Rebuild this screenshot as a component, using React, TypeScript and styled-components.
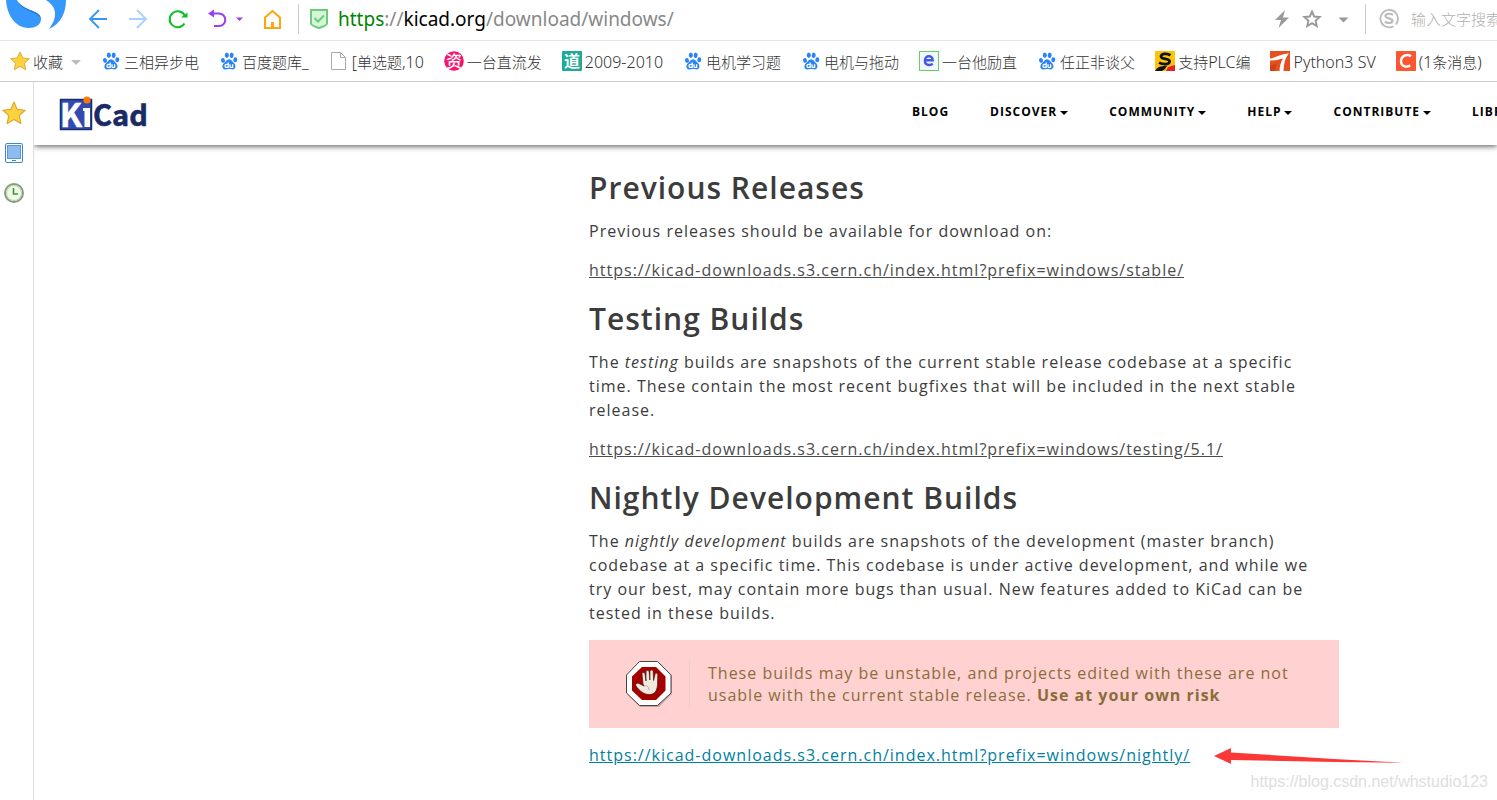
import React from "react";
import styled, { createGlobalStyle } from "styled-components";

const GlobalStyle = createGlobalStyle`
  * { box-sizing: border-box; }
  body {
    margin: 0;
    background: #fff;
    overflow: hidden;
    font-family: "Open Sans", "Noto Sans CJK SC", sans-serif;
  }
`;

const uiFont = `"Noto Sans", "Noto Sans CJK SC", sans-serif`;

/* ---------- browser chrome ---------- */

const Browser = styled.div`
  display: flex;
  flex-direction: column;
  min-height: 100vh;
  overflow: hidden;
`;

const Toolbar = styled.header`
  display: flex;
  align-items: center;
  height: 41px;
  padding-bottom: 2px;
  border-bottom: 1px solid #e5e5e5;
  overflow: hidden;
`;

const BrandMark = styled.div`
  width: 78px;
  height: 38px;
  flex: none;
`;

const ToolButtons = styled.div`
  display: flex;
  align-items: center;
  gap: 20px;
  padding-left: 10px;
  flex: none;
`;

const ToolButton = styled.button<{ $w?: number }>`
  display: flex;
  align-items: center;
  width: ${(p) => p.$w ?? 20}px;
  height: 24px;
  padding: 0;
  border: 0;
  background: none;
  flex: none;
`;

const Divider = styled.span<{ $gap: number }>`
  width: 1px;
  height: 30px;
  margin: 0 10px 0 ${(p) => p.$gap}px;
  background: #ccc;
  flex: none;
`;

const Address = styled.div`
  display: flex;
  flex: 1;
  align-items: center;
  gap: 9px;
  min-width: 0;
`;

const Url = styled.span`
  font: 19px/24px ${uiFont};
  color: #888;
  white-space: nowrap;
`;

const Scheme = styled.span`
  color: #008500;
`;

const Host = styled.span`
  color: #000;
`;

const AddressTools = styled.div`
  display: flex;
  gap: 10px;
  flex: none;
`;

const SearchLabel = styled.label`
  display: flex;
  align-items: center;
  gap: 12px;
  width: 121px;
  padding-left: 3px;
  flex: none;
  overflow: hidden;
  svg { flex: none; }
`;

const SearchInput = styled.input`
  width: 180px;
  padding: 0;
  border: 0;
  outline: 0;
  flex: none;
  font: 300 15px/24px ${uiFont};
  background: none;
  &::placeholder {
    color: #b0b0b0;
    opacity: 1;
  }
`;

const Bookmarks = styled.nav`
  display: flex;
  align-items: center;
  gap: 20px;
  height: 41px;
  padding: 2px 0 0 10px;
  border-bottom: 1px solid #ccc;
  overflow: hidden;
`;

const Bookmark = styled.a`
  display: flex;
  align-items: center;
  gap: 3px;
  flex: none;
  color: #333;
  font: 300 15px/22px ${uiFont};
  text-decoration: none;
  white-space: nowrap;
  svg { margin-bottom: 2px; }
`;

const BookmarkMenu = styled(Bookmark).attrs({ as: "button" })`
  padding: 0;
  border: 0;
  background: none;
`;

const Latin = styled.span`
  font-size: 16px;
`;

const MenuCaret = styled.span`
  margin-left: 5px;
  border: 5px solid transparent;
  border-top-color: #bbb;
  border-bottom: 0;
`;

const Main = styled.div`
  display: flex;
  flex: 1;
`;

const SideBar = styled.aside`
  display: flex;
  flex-direction: column;
  align-items: center;
  gap: 16px;
  width: 34px;
  padding: 19px 6px 0 0;
  border-right: 1px solid #ddd;
  flex: none;
`;

const SideButton = styled(ToolButton)`
  width: 24px;
  justify-content: center;
`;

/* ---------- site ---------- */

const Site = styled.div`
  flex: 1;
  min-width: 0;
  overflow: hidden;
`;

const SiteHeader = styled.header`
  position: relative;
  display: flex;
  align-items: center;
  height: 63px;
  padding-left: 25px;
  background: #fff;
  box-shadow: 0 1px 6px rgba(0, 0, 0, 0.7);
`;

const LogoLink = styled.a`
  display: flex;
  flex: none;
  width: 90px;
`;

const SiteNav = styled.nav`
  display: flex;
  gap: 41px;
  margin-left: 763px;
  padding-bottom: 3px;
`;

const NavItem = styled.a`
  display: flex;
  align-items: center;
  gap: 3px;
  color: #000;
  font: 700 12px/20px "Open Sans", sans-serif;
  letter-spacing: 1px;
  text-decoration: none;
  white-space: nowrap;
`;

const NavCaret = styled.span`
  margin-top: 2px;
  border: 4px solid transparent;
  border-top-color: #000;
  border-bottom: 0;
`;

const Article = styled.main`
  width: 750px;
  margin-left: 555px;
  padding-top: 6px;
  color: #3c3c3c;
  font-size: 16px;
  line-height: 24px;
  letter-spacing: 1px;
`;

const Heading = styled.h2`
  margin: 20px 0 15px;
  font-size: 30px;
  line-height: 33px;
  font-weight: 600;
  letter-spacing: 1px;
`;

const Text = styled.p`
  margin: 0 0 15px;
  padding-right: 10px;
`;

const TextLink = styled.a<{ $active?: boolean }>`
  color: ${(p) => (p.$active ? "#007f9f" : "#4c4c4c")};
  text-decoration: underline;
`;

const Warning = styled.div`
  display: flex;
  align-items: center;
  height: 88px;
  margin-bottom: 15px;
  padding: 0 20px;
  background: #ffd1d1;
  color: #8a6d3b;
  line-height: 22px;
`;

const WarningIcon = styled.div`
  display: flex;
  align-items: center;
  width: 81px;
  height: 48px;
  padding-left: 16px;
  border-right: 1px solid #e6d0c8;
  flex: none;
`;

const WarningText = styled.p`
  margin: 0 0 0 18px;
`;

const LinkRow = styled.div`
  display: flex;
  align-items: center;
  gap: 24px;
  white-space: nowrap;
  svg { flex: none; }
`;

const Watermark = styled.div`
  position: absolute;
  right: 9px;
  bottom: 8px;
  color: #dedede;
  font: 16px/20px "Liberation Sans", sans-serif;
`;

/* ---------- icons ---------- */

const Paw = () => (
  <svg width="20" height="20" viewBox="0 0 20 20">
    <g fill="#2b83f6">
      <ellipse cx="4" cy="9.4" rx="2" ry="2.5" transform="rotate(-12 4 9.4)" />
      <ellipse cx="7.8" cy="4.2" rx="2" ry="2.7" />
      <ellipse cx="12.7" cy="4.3" rx="2" ry="2.7" transform="rotate(10 12.7 4.3)" />
      <ellipse cx="16.3" cy="8.7" rx="2" ry="2.5" transform="rotate(8 16.3 8.7)" />
      <path d="M10.1 8.2c2.3 0 3 2.3 4.8 3.8 2.2 1.9 2.4 6.3-1.4 6.4-1.4 0-2-.4-3.5-.4s-2.2.5-3.6.4c-3.7-.2-3.7-4.3-1.4-6.2 2-1.7 2.7-4 5.1-4z" />
    </g>
    <g fill="none" stroke="#fff" strokeWidth="1.3">
      <path d="M9.2 11.4v5H7.5a1.4 1.4 0 0 1 0-3h1.7M11 13.2v2.2q0 1 1 1h1.6v-3.2" />
    </g>
  </svg>
);

const StarIcon = ({ size = 20 }: { size?: number }) => (
  <svg width={size} height={size} viewBox="0 0 22 22">
    <path d="M11 1l3 6.7 7.2.8-5.4 4.9 1.5 7.2-6.3-3.7-6.3 3.7 1.5-7.2L.8 8.5 8 7.7z" fill="#fcd33c" stroke="#dfa32c" strokeWidth="1" strokeLinejoin="round" />
  </svg>
);

const PageIcon = () => (
  <svg width="20" height="20" viewBox="0 0 20 20" fill="#fff" stroke="#aaa">
    <path d="M2.500 1.500h9l5 5v12h-14zM11.500 1.500v5h5" />
  </svg>
);

const ZiIcon = () => (
  <svg width="20" height="20" viewBox="0 0 20 20">
    <circle cx="10" cy="10" r="9.8" fill="#f5156f" />
    <text x="10" y="16" textAnchor="middle" fontFamily="Noto Sans CJK SC" fontWeight="500" fontSize="16" fill="#fff">资</text>
  </svg>
);

const DaoIcon = () => (
  <svg width="20" height="20" viewBox="0 0 20 20">
    <rect width="20" height="20" rx="1" fill="#1faa98" />
    <text x="10" y="16" textAnchor="middle" fontFamily="Noto Sans CJK SC" fontWeight="700" fontSize="16" fill="#fff">道</text>
  </svg>
);

const EIcon = () => (
  <svg width="20" height="20" viewBox="0 0 20 20">
    <rect x=".5" y=".5" width="19" height="19" fill="#f4f6ff" stroke="#5fd35f" />
    <path d="M5.500 9.200h8.200c0-5.300-7.800-5.300-7.800.2 0 5.200 5.400 5.300 7.800 3.400" fill="none" stroke="#4059e8" strokeWidth="2.400" />
  </svg>
);

const SIcon = () => (
  <svg width="20" height="20" viewBox="0 0 20 20">
    <rect width="20" height="20" rx="1" fill="#fdc50a" />
    <path d="M11 20l2-4 7-2v6z" fill="#e32222" />
    <path d="M15.500 4.200C12 2 5.500 2.500 6 5.700c.5 3 9 1.400 8.600 4.900-.4 3.400-7.600 2.800-10.600 1" fill="none" stroke="#111" strokeWidth="2.800" />
    <path d="M0 20c1-1 2-4 6-4.500 3-.3 4-1 6-.5L10 18l-3 2z" fill="#111" />
  </svg>
);

const OneIcon = () => (
  <svg width="20" height="20" viewBox="0 0 20 20">
    <rect width="20" height="20" fill="#e5501f" />
    <path d="M0 7.500C6 7 9 3 19 2.500 15 7 14 12 13.500 20H9.500c.3-5 1-8.500 3.500-12.500C9 8 6 10 0 9.500z" fill="#fff" />
    <path d="M0 15l7-3-2 8H0z" fill="#cf4219" />
  </svg>
);

const CIcon = () => (
  <svg width="20" height="20" viewBox="0 0 20 20">
    <rect width="20" height="20" rx="1" fill="#fc5531" />
    <path d="M15 5.300C11 2.700 5.200 4.500 5 10c-.1 5.500 5 6.700 9.300 4.700" fill="none" stroke="#fff" strokeWidth="2.400" />
  </svg>
);

const KiCadLogo = () => (
  <svg width="90" height="36" viewBox="0 0 90 36" role="img" aria-label="KiCad">
    <rect x="1.500" y="3.500" width="31" height="30" fill="#314cb0" stroke="#1c2c68" strokeWidth="1.500" />
    <g fontFamily="Noto Sans CJK SC, sans-serif" fontWeight="700">
      <text x="1" y="31" fontSize="32" fill="#fff" stroke="#fff" strokeWidth=".6">K</text>
      <text x="34" y="30" fontSize="29" fill="#1a2a66" stroke="#1a2a66" strokeWidth=".6">Cad</text>
    </g>
    <path d="M24 12h7v19h-5.500V15H24z" fill="#fff" />
    <circle cx="28" cy="4" r="3.600" fill="#ff7800" />
  </svg>
);

const StopHand = () => (
  <svg width="48" height="48" viewBox="0 0 48 48">
    <path d="M15 3h20l12 13v18L34 47H15L3 35V15z" fill="#555" opacity=".35" />
    <path d="M14.500 1.500h18L46 15v18L32.500 45.500h-18L1.500 33V15z" fill="#fff" stroke="#444" />
    <path d="M17 7h14l9.500 9.500v14L31 40H17l-10-9.500v-14z" fill="#a50000" />
    <path d="M18 24l-1-10c0-2 2.600-2 3 0l1 7V12c0-2 3-2 3.200 0l.6 8 .2-8.500c0-2 3-2 3.200 0l.4 9 1.400-6c.4-2 3-1.500 2.800.5L32.500 25c-.5 6-3 9.500-8 9.500-5.500 0-10-3.500-13.500-8.500-1-2 1-3.500 3-2.500l5 2.500z" fill="#f0eadf" stroke="#4b1512" strokeWidth=".7" />
    <path d="M19 26c3-1 5 1 5 4" fill="none" stroke="#b9aa98" />
  </svg>
);

const bookmarks: [React.FC, string][] = [
  [Paw, "三相异步电"],
  [Paw, "百度题库_"],
  [PageIcon, "[单选题,10"],
  [ZiIcon, "一台直流发"],
  [DaoIcon, "2009-2010"],
  [Paw, "电机学习题"],
  [Paw, "电机与拖动"],
  [EIcon, "一台他励直"],
  [Paw, "任正非谈父"],
  [SIcon, "支持PLC编"],
  [OneIcon, "Python3 SV"],
  [CIcon, "(1条消息)"],
];

/* Latin runs are set one size up so they sit evenly beside the Chinese characters. */
const BookmarkLabel = ({ text }: { text: string }) => (
  <span>
    {text.split(/([\x20-\x7e]+)/).map((run, i) => (i % 2 ? <Latin key={i}>{run}</Latin> : run))}
  </span>
);

const navItems: [string, boolean][] = [
  ["BLOG", false],
  ["DISCOVER", true],
  ["COMMUNITY", true],
  ["HELP", true],
  ["CONTRIBUTE", true],
  ["LIBRARIES", true],
];

const downloads = "https://kicad-downloads.s3.cern.ch/index.html?prefix=windows/";

export default function App() {
  return (
    <Browser>
      <GlobalStyle />
      <Toolbar>
        <BrandMark>
          <svg width="78" height="38" viewBox="0 0 78 38">
            <path d="M6 0C7 16 16 28 29 28c6 0 12-3 12-9C41 10 22 11 17 0z" fill="#3698fc" />
            <path d="M46 0c11 7 12 17 3 29C61 24 66 12 66 0z" fill="#3698fc" />
            <path d="M17 0c5 11 24 10 24 19C37 11 22 12 17 0z" fill="#1c78dc" />
          </svg>
        </BrandMark>
        <ToolButtons>
          <ToolButton aria-label="Back">
            <svg width="20" height="20" viewBox="0 0 20 20" fill="none" stroke="#3596fa" strokeWidth="1.800"><path d="M19 10H3M11 1l-9 9 9 9" /></svg>
          </ToolButton>
          <ToolButton aria-label="Forward">
            <svg width="20" height="20" viewBox="0 0 20 20" fill="none" stroke="#a9d1fd" strokeWidth="1.800"><path d="M1 10h16M9 1l9 9-9 9" /></svg>
          </ToolButton>
          <ToolButton aria-label="Reload">
            <svg width="20" height="20" viewBox="0 0 20 20"><path d="M16.500 14.500A8 8 0 1 1 17 7" fill="none" stroke="#0abf20" strokeWidth="2" /><path d="M13 8.500h6.500V3.500z" fill="#0abf20" /></svg>
          </ToolButton>
          <ToolButton aria-label="Undo" $w={36}>
            <svg width="36" height="20" viewBox="0 0 36 20"><path d="M4 4.500h7a6.200 6.200 0 0 1 0 12.500H6" fill="none" stroke="#9a3df4" strokeWidth="2" /><path d="M0 4.500L6 .5v8zM28 8.500h7L31.500 12z" fill="#9a3df4" /></svg>
          </ToolButton>
          <ToolButton aria-label="Home">
            <svg width="20" height="20" viewBox="0 0 20 20" fill="none" stroke="#ffa511" strokeWidth="2"><path d="M1 8.500V19h15V8.500L8.500 2z" /><path d="M8.500 19v-6" strokeWidth="3" /></svg>
          </ToolButton>
        </ToolButtons>
        <Divider $gap={14} />
        <Address>
          <svg width="20" height="20" viewBox="0 0 20 20" fill="#d5f6d9" stroke="#6ecb7c" strokeWidth="2"><path d="M2 1h16v13.500c0 2-5 3.500-8 4.500-3-1-8-2.500-8-4.500z" /><path d="M5.500 9l3.500 3.500L15 6.500" fill="none" /></svg>
          <Url><Scheme>https</Scheme>://<Host>kicad.org</Host>/download/windows/</Url>
        </Address>
        <AddressTools>
          <ToolButton aria-label="Fast mode">
            <svg width="20" height="20" viewBox="0 0 20 20"><path d="M13 1L3 11h6L6.500 19 17 8.500h-6z" fill="#999" /></svg>
          </ToolButton>
          <ToolButton aria-label="Add to favourites">
            <svg width="20" height="20" viewBox="0 0 20 20"><path d="M10 2.500l2.200 5 5.500.5-4.100 3.600 1.200 5.400-4.800-2.800L5.200 17l1.200-5.400L2.300 8l5.500-.5z" fill="none" stroke="#999" strokeWidth="1.900" /></svg>
          </ToolButton>
          <ToolButton aria-label="More">
            <svg width="20" height="20" viewBox="0 0 20 20"><path d="M6.500 8.500h10l-5 5z" fill="#999" /></svg>
          </ToolButton>
        </AddressTools>
        <Divider $gap={13} />
        <SearchLabel>
          <svg width="20" height="20" viewBox="0 0 20 20" fill="none" stroke="#bbb"><path d="M14.500 17.200A8.700 8.700 0 1 1 18 13.500l-1 2" strokeWidth="1.800" /><path d="M14 5.800C10 3.800 6 5 6.500 7.500c.5 2.200 7 1.500 7 4.300 0 2.700-5 2.700-7.700 1" strokeWidth="2.200" /></svg>
          <SearchInput placeholder="输入文字搜索" aria-label="搜索" />
        </SearchLabel>
      </Toolbar>

      <Bookmarks>
        <BookmarkMenu>
          <StarIcon />
          收藏
          <MenuCaret />
        </BookmarkMenu>
        {bookmarks.map(([Icon, label]) => (
          <Bookmark href="#" key={label}>
            <Icon />
            <BookmarkLabel text={label} />
          </Bookmark>
        ))}
      </Bookmarks>

      <Main>
        <SideBar>
          <SideButton aria-label="Favourites"><StarIcon size={24} /></SideButton>
          <SideButton aria-label="Reading list">
            <svg width="20" height="22" viewBox="0 0 20 22"><rect x="1.500" y="1.500" width="17" height="19" rx="1.500" fill="#fff" stroke="#3f87cf" /><rect x="3.500" y="3.500" width="13" height="13" fill="#8cbcf2" stroke="#5a98dd" /><path d="M8 18.500h4" stroke="#3f87cf" /></svg>
          </SideButton>
          <SideButton aria-label="History">
            <svg width="22" height="22" viewBox="0 0 22 22"><circle cx="11" cy="11" r="9" fill="#f1fbe9" stroke="#8a9c85" strokeWidth="2" /><circle cx="11" cy="11" r="7.500" fill="none" stroke="#b0dc9a" /><path d="M10.500 6v6H15" fill="none" stroke="#4b8c42" strokeWidth="1.600" /></svg>
          </SideButton>
        </SideBar>

        <Site>
          <SiteHeader>
            <LogoLink href="#" aria-label="KiCad"><KiCadLogo /></LogoLink>
            <SiteNav>
              {navItems.map(([label, menu]) => (
                <NavItem href="#" key={label}>
                  {label}
                  {menu && <NavCaret />}
                </NavItem>
              ))}
            </SiteNav>
          </SiteHeader>

          <Article>
            <Heading>Previous Releases</Heading>
            <Text>Previous releases should be available for download on:</Text>
            <Text><TextLink href="#">{downloads}stable/</TextLink></Text>

            <Heading>Testing Builds</Heading>
            <Text>
              The <em>testing</em> builds are snapshots of the current stable release codebase at a specific time. These
              contain the most recent bugfixes that will be included in the next stable release.
            </Text>
            <Text><TextLink href="#">{downloads}testing/5.1/</TextLink></Text>

            <Heading>Nightly Development Builds</Heading>
            <Text>
              The <em>nightly development</em> builds are snapshots of the development (master branch) codebase at a
              specific time. This codebase is under active development, and while we try our best, may contain more bugs
              than usual. New features added to KiCad can be tested in these builds.
            </Text>
            <Warning>
              <WarningIcon><StopHand /></WarningIcon>
              <WarningText>
                These builds may be unstable, and projects edited with these are not usable with the current stable
                release. <strong>Use at your own risk</strong>
              </WarningText>
            </Warning>
            <LinkRow>
              <TextLink href="#" $active>{downloads}nightly/</TextLink>
              <svg width="190" height="18" viewBox="0 0 190 18"><path d="M0 10L17 2v4.500L120 13l70 3.700-70-.7-103-2v4z" fill="#fb3838" /></svg>
            </LinkRow>
          </Article>
        </Site>
      </Main>
      <Watermark>https://blog.csdn.net/whstudio123</Watermark>
    </Browser>
  );
}
